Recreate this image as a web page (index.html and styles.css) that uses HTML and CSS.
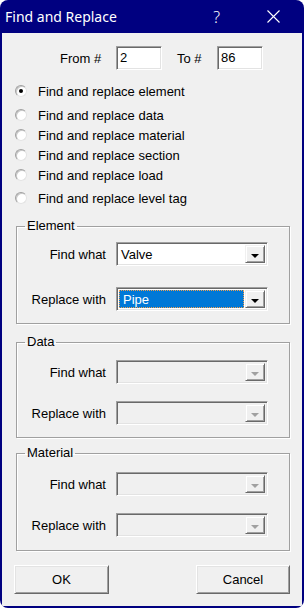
FILE: index.html
```html
<!doctype html>
<html lang="en">
<head>
    <meta charset="UTF-8">
    <title>Find and Replace</title>
    <link rel="stylesheet" href="styles.css">
</head>
<body>
<div class="window">
    <div class="titlebar">
        <span class="title">Find and Replace</span>
        <span class="help">?</span>
        <svg class="close" width="13" height="13" viewBox="0 0 13 13">
            <path d="M0.5 0.5 L12.5 12.5 M12.5 0.5 L0.5 12.5" stroke="#fff" stroke-width="1.1" fill="none"/>
        </svg>
    </div>
    <div class="client">
        <div class="range">
            <label class="from">From #</label>
            <div class="edit">2</div>
            <label class="to">To #</label>
            <div class="edit">86</div>
        </div>
        <ul class="radios">
            <li class="checked"><span class="radio"></span>Find and replace element</li>
            <li><span class="radio"></span>Find and replace data</li>
            <li><span class="radio"></span>Find and replace material</li>
            <li><span class="radio"></span>Find and replace section</li>
            <li><span class="radio"></span>Find and replace load</li>
            <li class="last"><span class="radio"></span>Find and replace level tag</li>
        </ul>

        <fieldset class="group group-element">
            <legend>Element</legend>
            <div class="field">
                <label>Find what</label>
                <div class="combo"><span class="value">Valve</span><span class="drop"></span></div>
            </div>
            <div class="field">
                <label>Replace with</label>
                <div class="combo"><span class="value selected"><span>Pipe</span></span><span class="drop"></span></div>
            </div>
        </fieldset>

        <fieldset class="group group-data">
            <legend>Data</legend>
            <div class="field">
                <label>Find what</label>
                <div class="combo disabled"><span class="value"></span><span class="drop"></span></div>
            </div>
            <div class="field">
                <label>Replace with</label>
                <div class="combo disabled"><span class="value"></span><span class="drop"></span></div>
            </div>
        </fieldset>

        <fieldset class="group group-material">
            <legend>Material</legend>
            <div class="field">
                <label>Find what</label>
                <div class="combo disabled"><span class="value"></span><span class="drop"></span></div>
            </div>
            <div class="field">
                <label>Replace with</label>
                <div class="combo disabled"><span class="value"></span><span class="drop"></span></div>
            </div>
        </fieldset>

        <div class="buttons">
            <button class="btn btn-ok">OK</button>
            <button class="btn btn-cancel">Cancel</button>
        </div>
    </div>
</div>
</body>
</html>
```

FILE: styles.css
```css
* {
    margin: 0;
    padding: 0;
    box-sizing: border-box;
    list-style: none;
}
body {
    background: #fff;
    font-family: "Liberation Sans", Arial, sans-serif;
    font-size: 13px;
    color: #000;
}
.window {
    width: 304px;
    height: 608px;
    background: #000080;
    border-radius: 8px;
    padding: 0 2px 2px 2px;
    display: flex;
    flex-direction: column;
    overflow: hidden;
}
.titlebar {
    height: 33px;
    flex: none;
    display: flex;
    align-items: center;
    padding-left: 3px;
    color: #fff;
    font-family: "Noto Sans", sans-serif;
    font-size: 14px;
}
.title {
    flex: 1;
}
.help {
    font-size: 16px;
    font-weight: 300;
    margin-right: 47px;
}
.close {
    margin-right: 22px;
}
.client {
    flex: 1;
    background: #f0f0f0;
}

/* from / to */
.range {
    display: flex;
    align-items: center;
    margin-top: 13px;
    padding-left: 58px;
    height: 24px;
}
.range .from {
    width: 56px;
}
.range .to {
    width: 40px;
    margin-left: 15px;
}
.edit {
    width: 46px;
    height: 24px;
    background: #fff;
    border: 1px solid;
    border-color: #a0a0a0 #fff #fff #a0a0a0;
    box-shadow: inset 1px 1px 0 #696969, inset -1px -1px 0 #e3e3e3;
    padding: 3px 0 0 3px;
    line-height: 16px;
}

/* radios */
.radios {
    margin-top: 11px;
    padding-left: 13px;
}
.radios li {
    height: 20px;
    display: flex;
    align-items: center;
}
.radios li:nth-child(2) {
    margin-top: 4px;
}
.radios li.last {
    margin-top: 3px;
}
.radio {
    width: 12px;
    height: 12px;
    border-radius: 50%;
    background: #fff;
    border: 1px solid;
    border-color: #a0a0a0 #e3e3e3 #e3e3e3 #a0a0a0;
    box-shadow: inset 1px 1px 0 #c8c8c8;
    margin-right: 11px;
    position: relative;
}
.checked .radio::after {
    content: "";
    position: absolute;
    left: 3px;
    top: 3px;
    width: 4px;
    height: 4px;
    border-radius: 50%;
    background: #000;
}

/* group boxes */
.group {
    margin: 0 12px 0 14px;
    border: 1px solid #a0a0a0;
    box-shadow: inset 1px 1px 0 #fff, 1px 1px 0 #fff;
    padding: 0 0 12px 0;
}
.group legend {
    margin-left: 8px;
    padding: 0 2px;
    line-height: 16px;
}
.group-element {
    margin-top: 10px;
}
.group-element .field:first-of-type {
    margin-top: 8px;
}
.group-element .field + .field {
    margin-top: 21px;
}
.group-data {
    margin-top: 10px;
}
.group-material {
    margin-top: 7px;
    padding-bottom: 13px;
}
.field {
    display: flex;
    align-items: center;
    margin-top: 10px;
}
.field + .field {
    margin-top: 17px;
}
.group-material .field:first-of-type {
    margin-top: 11px;
}
.field label {
    width: 89px;
    text-align: right;
    margin-right: 10px;
}

/* combo boxes */
.combo {
    width: 152px;
    height: 24px;
    background: #fff;
    border: 1px solid;
    border-color: #a0a0a0 #fff #fff #a0a0a0;
    box-shadow: inset 1px 1px 0 #696969, inset -1px -1px 0 #e3e3e3;
    padding: 2px;
    display: flex;
}
.combo.disabled {
    background: #f0f0f0;
}
.combo .value {
    flex: 1;
    padding-left: 2px;
    line-height: 20px;
}
.combo .value.selected {
    background: #0078d7;
    color: #fff;
    border: 1px dotted #f0a050;
    padding-left: 3px;
    line-height: 18px;
    margin-right: 1px;
}
.drop {
    width: 20px;
    background: #f0f0f0;
    border: 1px solid;
    border-color: #f0f0f0 #696969 #696969 #f0f0f0;
    box-shadow: inset 1px 1px 0 #fff, inset -1px -1px 0 #a0a0a0;
    position: relative;
}
.drop::after {
    content: "";
    position: absolute;
    left: 5px;
    top: 8px;
    border-left: 4px solid transparent;
    border-right: 4px solid transparent;
    border-top: 4px solid #000;
}
.disabled .drop::after {
    border-top-color: #a0a0a0;
}

/* buttons */
.buttons {
    display: flex;
    justify-content: space-between;
    margin: 14px 12px 0 12px;
}
.btn {
    height: 29px;
    font-family: "Liberation Sans", Arial, sans-serif;
    font-size: 13px;
    color: #000;
    background: #f0f0f0;
    border: 1px solid;
    border-color: #fff #696969 #696969 #fff;
    box-shadow: inset 1px 1px 0 #e3e3e3, inset -1px -1px 0 #a0a0a0;
}
.btn-ok {
    width: 95px;
}
.btn-cancel {
    width: 94px;
}
```
